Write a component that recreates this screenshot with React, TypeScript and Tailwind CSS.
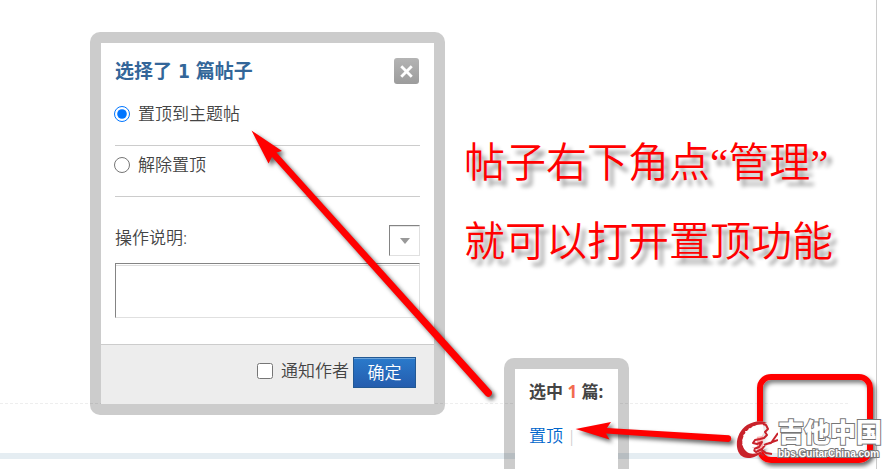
import { useState } from "react";
import { X } from "lucide-react";

const ACTIONS = [
  { id: "stick", label: "置顶到主题帖" },
  { id: "unstick", label: "解除置顶" },
];

function TopicAdminDialog() {
  const [action, setAction] = useState("stick");
  const [reason, setReason] = useState("");
  const [notify, setNotify] = useState(false);

  return (
    <form
      onSubmit={(e) => e.preventDefault()}
      className="absolute left-[90px] top-8 w-[355px] rounded-[10px] border-[11px] border-black/20 bg-white bg-clip-padding"
    >
      <div className="px-[14px] pt-[15px] pb-[26px]">
        <div className="flex items-center justify-between">
          <h3 className="font-['DejaVu_Sans_Condensed','Noto_Sans_CJK_SC',sans-serif] text-[19px] leading-[26px] font-bold text-[#336699]">
            选择了 1 篇帖子
          </h3>
          <button
            type="button"
            aria-label="关闭"
            className="mr-px flex h-[26px] w-[25px] items-center justify-center rounded-[3px] bg-linear-to-b from-[#b4b4b4] to-[#9c9c9c] text-white"
          >
            <X size={17} strokeWidth={4} strokeLinecap="square" />
          </button>
        </div>

        <ul className="mt-[11px]">
          {ACTIONS.map((item) => (
            <li key={item.id} className="h-[51px] border-b border-[#cccccc] pt-2">
              <label className="flex items-center gap-2 leading-[22px]">
                <input
                  type="radio"
                  name="action"
                  checked={action === item.id}
                  onChange={() => setAction(item.id)}
                  className="-ml-px size-4 accent-[#0075ff]"
                />
                {item.label}
              </label>
            </li>
          ))}
        </ul>

        <div className="mt-7 flex items-start justify-between">
          <label htmlFor="reason" className="leading-[26px]">操作说明:</label>
          <div className="relative size-[31px]">
            <select
              aria-label="常用说明"
              className="size-full appearance-none border border-t-[#848484] border-r-[#e0e0e0] border-b-[#e0e0e0] border-l-[#848484] bg-white shadow-[inset_0_1px_0_#e6e6e6]"
            >
              <option value=""></option>
            </select>
            <svg viewBox="0 0 10 6" className="pointer-events-none absolute top-[13px] left-[11px] h-[6px] w-[10px] fill-[#999999]">
              <path d="M0 0h10L5 6z" />
            </svg>
          </div>
        </div>
        <textarea
          id="reason"
          value={reason}
          onChange={(e) => setReason(e.target.value)}
          className="mt-[7px] block h-[55px] w-full resize-none border border-t-[#848484] border-r-[#e0e0e0] border-b-[#e0e0e0] border-l-[#848484] px-1 shadow-[inset_0_1px_0_#ffffff,inset_0_2px_0_#dddddd]"
        />
      </div>

      <div className="flex items-start justify-end gap-1 border-t border-[#cccccc] bg-[#ededed] pt-3 pr-[18px] pb-4">
        <label className="flex items-center gap-2 leading-7">
          <input
            type="checkbox"
            checked={notify}
            onChange={(e) => setNotify(e.target.checked)}
            className="size-4"
          />
          通知作者
        </label>
        <button
          type="submit"
          className="h-[31px] w-[63px] border border-[#235994] bg-linear-to-b from-[#2a7acb] to-[#255dae] text-white shadow-[inset_0_1px_0_#6ea6dc]"
        >
          确定
        </button>
      </div>
    </form>
  );
}

function SelectionMenu() {
  return (
    <div className="absolute left-[504px] top-[358px] w-[125px] rounded-[10px] border-[11px] border-black/20 bg-white bg-clip-padding px-[14px] pt-3 pb-12">
      <h4 className="leading-[22px] font-bold whitespace-nowrap">
        选中 <span className="text-[#f26c4f]">1</span> 篇:
      </h4>
      <p className="mt-[22px] flex gap-1 leading-[22px]">
        <a href="#stick" className="text-[#0066cc]">置顶</a>
        <span className="text-[#cccccc]">|</span>
      </p>
    </div>
  );
}

function Annotations() {
  return (
    <div className="pointer-events-none">
      <p className="absolute left-[464px] top-[124px] font-['Liberation_Serif','Noto_Sans_CJK_SC',serif] text-[41px] leading-[79px] font-[350] whitespace-nowrap text-[#ff0000] [text-shadow:5px_6px_4px_rgba(0,0,0,0.4)]">
        帖子右下角点“管理”
        <br />
        就可以打开置顶功能
      </p>

      {/* manage button highlight */}
      <div className="absolute left-[757px] top-[374px] h-[89px] w-[116px] rounded-[14px] border-[6px] border-[#ff0000] shadow-[2px_3px_4px_rgba(0,0,0,0.6),inset_2px_3px_4px_rgba(0,0,0,0.5)]" />

      <svg viewBox="250 129 250 276" className="absolute left-[250px] top-[129px] h-[276px] w-[250px] fill-[#ff0000] drop-shadow-[3px_3px_2px_rgba(0,0,0,0.6)]">
        <path d="M251.500 130.500 L282 151 L276.500 152.500 L491 390.500 A3.700 3.700 0 0 1 485.500 395.500 L272 157 L268.500 163.500 Z" />
      </svg>
      <svg viewBox="574 419 170 30" className="absolute left-[574px] top-[419px] h-[30px] w-[170px] fill-[#ff0000] drop-shadow-[3px_3px_2px_rgba(0,0,0,0.6)]">
        <path d="M575.500 429 L611 422 L607 428 L729 435.300 A3.500 3.500 0 0 1 728.500 442 L606 433.500 L609.500 439.500 Z" />
      </svg>
    </div>
  );
}

function Watermark() {
  return (
    <div className="pointer-events-none absolute left-[736px] top-[418px] flex items-start">
      <svg viewBox="0 0 42 42" className="h-[42px] w-[42px]">
        <path
          d="M31 5C26 2 18 3 11 7C4 12 0 20 1 29C2 36 6 40 12 40C19 40 25 36 29 31L36 28L42 27L37 25L41 21L35 22L39 18L33 20L39 14L32 17L33 11L30 11Z"
          className="fill-white/70"
        />
        <path
          d="M31 5C26 2 18 3 11 7C4 12 0 20 1 29C2 36 6 40 12 40C19 40 25 36 29 31C22 36 15 37 11 34C6 30 5 24 8 17C12 10 20 6 27 6Z"
          className="fill-[#c8222b]"
        />
        <path
          d="M27 6L30 7L32 11L29 14L31 17L28 20L24 21L19 22L17 25L21 26L26 24L23 29L18 31L15 30L20 34L26 31L30 26L35 25L42 15M28 27L42 22M26 32L30 35L36 36M24 35L28 38"
          fill="none"
          strokeLinejoin="round"
          className="stroke-[#c8222b] stroke-2"
        />
        <path
          d="M27 7L21 7L19 9L17 8L15 11L13 10L12 13L9 13L10 16L7 17L9 20L6 22L8 24L6 27L9 28L8 31L11 31L12 34L14 32L17 34L18 30L14 28L15 23L20 19L26 18L28 14Z"
          className="fill-white"
        />
      </svg>
      <div className="whitespace-nowrap text-white [paint-order:stroke_fill] [-webkit-text-stroke:2px_#777777]">
        <div className="text-[26px] leading-[29px] font-black">吉他中国</div>
        <div className="font-['Liberation_Sans',sans-serif] text-[10px] leading-[14px] font-bold">bbs.GuitarChina.com</div>
      </div>
    </div>
  );
}

export default function App() {
  return (
    <div className="relative min-h-screen overflow-hidden bg-white font-['Noto_Sans','Noto_Sans_CJK_SC',sans-serif] text-[17px] leading-[22px] font-[350] text-[#444444]">
      {/* post list behind the dialogs */}
      <main className="mr-3 flex min-h-screen flex-col border-r border-[#cccccc]">
        <div className="mr-7 h-[404px] border-b border-dashed border-[#eeeeee]" />
        <div className="mt-[49px] h-[6px] bg-[#e5edf2]" />
      </main>

      <TopicAdminDialog />
      <SelectionMenu />
      <Annotations />
      <Watermark />
    </div>
  );
}
